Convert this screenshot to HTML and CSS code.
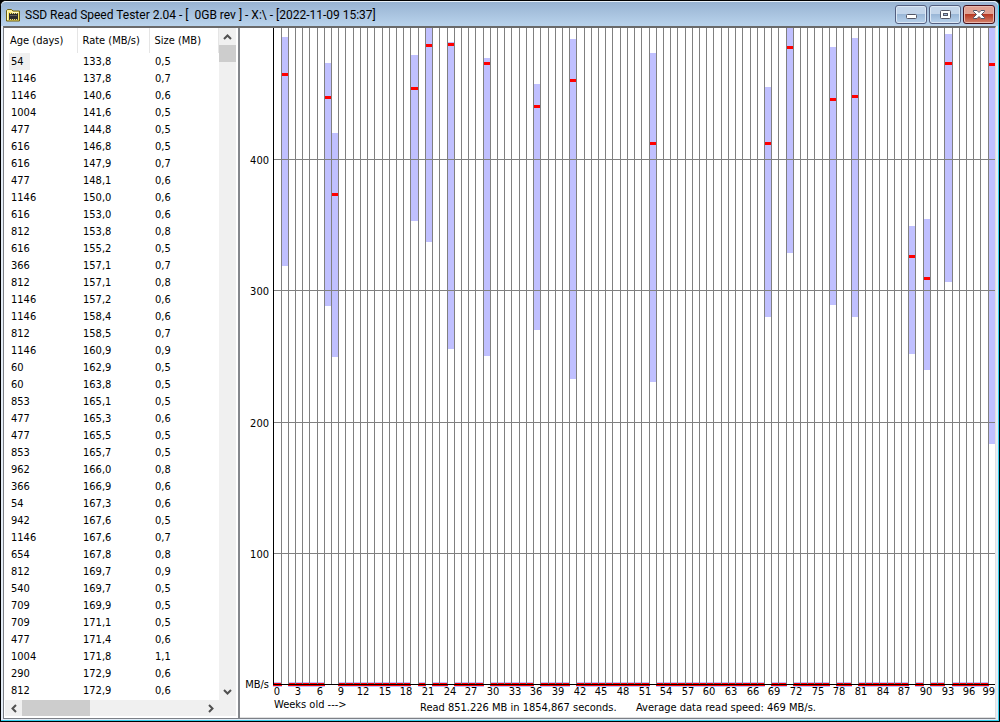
FILE: index.html
```html
<!DOCTYPE html>
<html lang="en">
<head>
<meta charset="utf-8">
<title>SSD Read Speed Tester 2.04</title>
<link rel="stylesheet" href="styles.css">
</head>
<body>
<div class="window">
  <header class="titlebar">
    <svg class="app-icon" viewBox="0 0 16 14" aria-hidden="true">
      <path d="M1.500 13V2.500l1-1h4l1.500 1.500h6.500V13z" fill="#f6e36c" stroke="#6b5f12"/>
      <path d="M2.500 12V3h4l1 1.500h6" fill="none" stroke="#fffbc8"/>
      <path d="M4 6h9v5H4z" fill="#2c2c2c"/>
      <path d="M4.500 5v1M6.500 5v1M8.500 5v1M10.500 5v1M12.500 5v1M4.500 11v1M6.500 11v1M8.500 11v1M10.500 11v1M12.500 11v1" stroke="#4a4a3a"/>
      <path d="M5 7h7v1H5z" fill="#5c5c5c"/>
    </svg>
    <h1 class="title">SSD Read Speed Tester 2.04 - [&nbsp; 0GB rev ] - X:\ - [2022-11-09 15:37]</h1>
    <div class="controls">
      <button class="control" type="button" aria-label="Minimize">
        <svg width="12" height="12" viewBox="0 0 12 12"><rect x="1.500" y="5.500" width="10" height="4" rx="1" fill="#fff" stroke="#535666"/></svg>
      </button>
      <button class="control" type="button" aria-label="Maximize">
        <svg width="12" height="12" viewBox="0 0 12 12"><rect x="1.500" y="1.500" width="10" height="8" rx="1" fill="#fff" stroke="#535666"/><rect x="4.500" y="4.500" width="4" height="2" fill="#9fb8d8" stroke="#535666"/></svg>
      </button>
      <button class="control close" type="button" aria-label="Close">
        <svg width="12" height="12" viewBox="0 0 12 12"><path d="M.5 1.500h3.500l2 2 2-2h3.500v1L8.500 5.500l3 3v1H8l-2-2-2 2H.5v-1l3-3-3-3z" fill="#fff" stroke="#535666"/></svg>
      </button>
    </div>
  </header>
  <main class="content">
    <section class="list" aria-label="Files">
      <div class="table-wrap">
        <table class="files">
          <thead><tr><th>Age (days)</th><th>Rate (MB/s)</th><th>Size (MB)</th></tr></thead>
          <tbody id="rows"></tbody>
        </table>
      </div>
      <div class="vscroll">
        <button class="arrow" type="button" aria-label="Scroll up"><svg width="9" height="6" viewBox="0 0 9 6"><path d="M1 5l3.500-3.500L8 5"/></svg></button>
        <div class="vthumb"></div>
        <button class="arrow" type="button" aria-label="Scroll down"><svg width="9" height="6" viewBox="0 0 9 6"><path d="M1 1l3.500 3.500L8 1"/></svg></button>
      </div>
      <div class="hscroll">
        <button class="arrow" type="button" aria-label="Scroll left"><svg width="6" height="9" viewBox="0 0 6 9"><path d="M5 1L1.500 4.500 5 8"/></svg></button>
        <div class="hthumb"></div>
        <button class="arrow" type="button" aria-label="Scroll right"><svg width="6" height="9" viewBox="0 0 6 9"><path d="M1 1l3.500 3.500L1 8"/></svg></button>
      </div>
    </section>
    <section class="report" aria-label="Read speed by age">
      <svg class="chart" id="chart"></svg>
      <footer class="summary">
        <span class="axis-name">Weeks old ---&gt;</span>
        <span class="total">Read 851.226 MB in 1854,867 seconds.</span>
        <span class="average">Average data read speed: 469 MB/s.</span>
      </footer>
    </section>
  </main>
</div>
<script src="app.js"></script>
</body>
</html>
```

FILE: styles.css
```css
* { box-sizing: border-box; }
body {
  margin: 0;
  background: #000;
  color: #000;
  font: 11px/17px "DejaVu Sans Condensed", "Noto Sans", sans-serif;
}
.window {
  display: flex;
  flex-direction: column;
  height: 100vh;
  padding: 0 3px 2px 2px;
  background: #e4edf7;
  border: 1px solid #000;
  border-radius: 6px 6px 0 0;
  box-shadow: inset -1px -1px #34d0ee;
}
.titlebar {
  display: flex;
  align-items: center;
  flex: 0 0 25px;
  gap: 4px;
  padding: 1px 0 0 4px;
  margin: 0 -2px 0 -2px;
  border-top: 1px solid #e8f0f8;
  border-radius: 5px 5px 0 0;
  background: linear-gradient(#98b3d2, #b9d3ec);
}
.app-icon { width: 16px; height: 14px; }
.title {
  flex: 1;
  margin: 0;
  font: 12px/20px Roboto, "Noto Sans", sans-serif;
  white-space: nowrap;
  overflow: hidden;
}
.controls { display: flex; gap: 2px; padding-right: 3px; }
.control {
  display: flex;
  align-items: center;
  justify-content: center;
  width: 32px;
  height: 19px;
  padding: 0;
  border: 1px solid #535f80;
  border-radius: 3px;
  background: linear-gradient(#c3d5ea 45%, #9ab7d7 50%, #b9d2ec);
  box-shadow: inset 0 0 0 1px #dce8f5;
}
.close {
  border-color: #43101c;
  background: linear-gradient(#e0a193 45%, #b83a24 50%, #d4826c);
  box-shadow: inset 0 0 0 1px #e9b8ad;
}
.content {
  display: flex;
  flex: 1;
  min-height: 0;
  border: 1px solid #7c8087;
  border-top: 2px solid #6a6a6a;
  border-right-color: #dfdfdf;
  background: #fff;
}
.list {
  display: grid;
  grid-template: minmax(0, 1fr) 16px / minmax(0, 1fr) 17px;
  flex: 0 0 236px;
  padding: 0 2px 2px 1px;
  border-right: 2px solid #84878c;
}
.table-wrap { overflow: hidden; }
.files { width: 100%; table-layout: fixed; border-collapse: collapse; }
.files th {
  height: 25px;
  padding: 0 0 0 5px;
  border-right: 1px solid #e5e5e5;
  font-weight: normal;
  text-align: left;
  white-space: nowrap;
}
.files th:nth-child(1), .files th:nth-child(2) { width: 72px; }
.files td { height: 17px; padding: 0 0 0 6px; line-height: 17px; }
.mark { background: #f0f0f0; padding: 2px 6px 2px 2px; margin-left: -2px; }
.vscroll { display: flex; flex-direction: column; background: #f0f0f0; }
.hscroll { display: flex; grid-column: 1 / 3; background: #f0f0f0; padding-right: 17px; }
.arrow {
  display: flex;
  align-items: center;
  justify-content: center;
  flex: 0 0 17px;
  padding: 0;
  border: 0;
  background: none;
}
.arrow path { fill: none; stroke: #505050; stroke-width: 2; }
.vthumb { height: 17px; margin-bottom: auto; background: #cdcdcd; }
.hthumb { width: 68px; margin-right: auto; background: #cdcdcd; }
.report { display: flex; flex: 1; flex-direction: column; min-width: 0; }
.chart { display: block; flex: 1; width: 100%; min-height: 0; }
.chart .axis { fill: #000; }
.chart .grid { fill: #808080; }
.chart .range { fill: #c0c0ff; }
.chart .mean { fill: #f00; }
.summary {
  display: flex;
  flex: 0 0 21px;
  padding-left: 34px;
  border-bottom: 1px solid #dfdfdf;
  white-space: nowrap;
}
.axis-name { flex: 0 0 146px; line-height: 15px; }
.total { flex: 0 0 216px; padding-top: 2px; }
.average { padding-top: 2px; }
```

FILE: app.js
```js
const files = `54 133,8 0,5|1146 137,8 0,7|1146 140,6 0,6|1004 141,6 0,5|477 144,8 0,5|616 146,8 0,5|616 147,9 0,7|477 148,1 0,6|1146 150,0 0,6|616 153,0 0,6|812 153,8 0,8|616 155,2 0,5|366 157,1 0,7|812 157,1 0,8|1146 157,2 0,6|1146 158,4 0,6|812 158,5 0,7|1146 160,9 0,9|60 162,9 0,5|60 163,8 0,5|853 165,1 0,5|477 165,3 0,6|477 165,5 0,5|853 165,7 0,5|962 166,0 0,8|366 166,9 0,6|54 167,3 0,6|942 167,6 0,5|1146 167,6 0,7|654 167,8 0,8|812 169,7 0,9|540 169,7 0,5|709 169,9 0,5|709 171,1 0,5|477 171,4 0,6|1004 171,8 1,1|290 172,9 0,6|812 172,9 0,6`;

document.getElementById("rows").innerHTML = files.split("|").map((line, i) => {
  const [age, rate, size] = line.split(" ");
  const first = i === 0 ? `<span class="mark">${age}</span>` : age;
  return `<tr><td>${first}</td><td>${rate}</td><td>${size}</td></tr>`;
}).join("");

// week: [highest, lowest, mean] in MB/s
const weeks = {
  1: [493, 318.5, 464.8], 7: [473.1, 288, 447.2], 8: [419.8, 249.1, 373.3],
  19: [479.2, 352.8, 454.1], 21: [500, 336.8, 486.9], 24: [489.1, 255.2, 487.6],
  29: [477, 249.9, 473.1], 36: [457.1, 269.7, 440.4], 41: [491.4, 232.4, 460.2],
  52: [480.8, 230.1, 412.2], 68: [454.9, 279.6, 412.2], 71: [500, 328.4, 485.3],
  77: [485.3, 288.8, 445.7], 80: [492.2, 279.6, 448], 88: [349, 251.4, 326.1],
  90: [354.3, 239.2, 309.3], 93: [495.2, 306.3, 473.1], 99: [500, 182.9, 472.4]
};

const chart = document.getElementById("chart");
const rect = (cls, x, y, w, h) => `<rect class="${cls}" x="${x}" y="${y}" width="${w}" height="${h}"/>`;

function draw() {
  const left = 33;
  const width = chart.clientWidth - left;
  const base = chart.clientHeight - 13;
  const pitch = (width - 0.5) / 100;
  const col = i => i === 0 ? left : left + Math.floor(0.845 + pitch * i);
  const y = v => Math.round(base - v * base / 500);
  let out = "";
  for (let i = 0; i < 100; i++) {
    const x = col(i);
    const w = Math.min(col(i + 1), left + width) - x;
    const data = weeks[i];
    if (data) {
      out += rect("range", x, y(data[0]), w, y(data[1]) - y(data[0]));
    } else {
      out += rect("range", x, base - 2, w + 1, 5) + rect("mean", x, base - 1, w + 1, 3);
    }
    out += rect("grid", x, 0, 1, base);
    if (data) out += rect("mean", x + 1, y(data[2]) - 1, w - 1, 3);
    if (i % 3 === 0) {
      const last = i === 99;
      const at = last ? left + width : x + Math.floor(w / 2);
      out += `<text x="${at}" y="${base + 11}" text-anchor="${last ? "end" : "middle"}">${i}</text>`;
    }
  }
  for (const v of [100, 200, 300, 400]) {
    out += rect("grid", left, y(v), width, 1);
    out += `<text x="${left - 4}" y="${y(v) + 5}" text-anchor="end">${v}</text>`;
  }
  out += `<text x="${left - 4}" y="${base + 4}" text-anchor="end">MB/s</text>`;
  out += rect("axis", left, 0, 1, base) + rect("axis", left, base, width, 1);
  chart.innerHTML = out;
}

draw();
addEventListener("resize", draw);
```
